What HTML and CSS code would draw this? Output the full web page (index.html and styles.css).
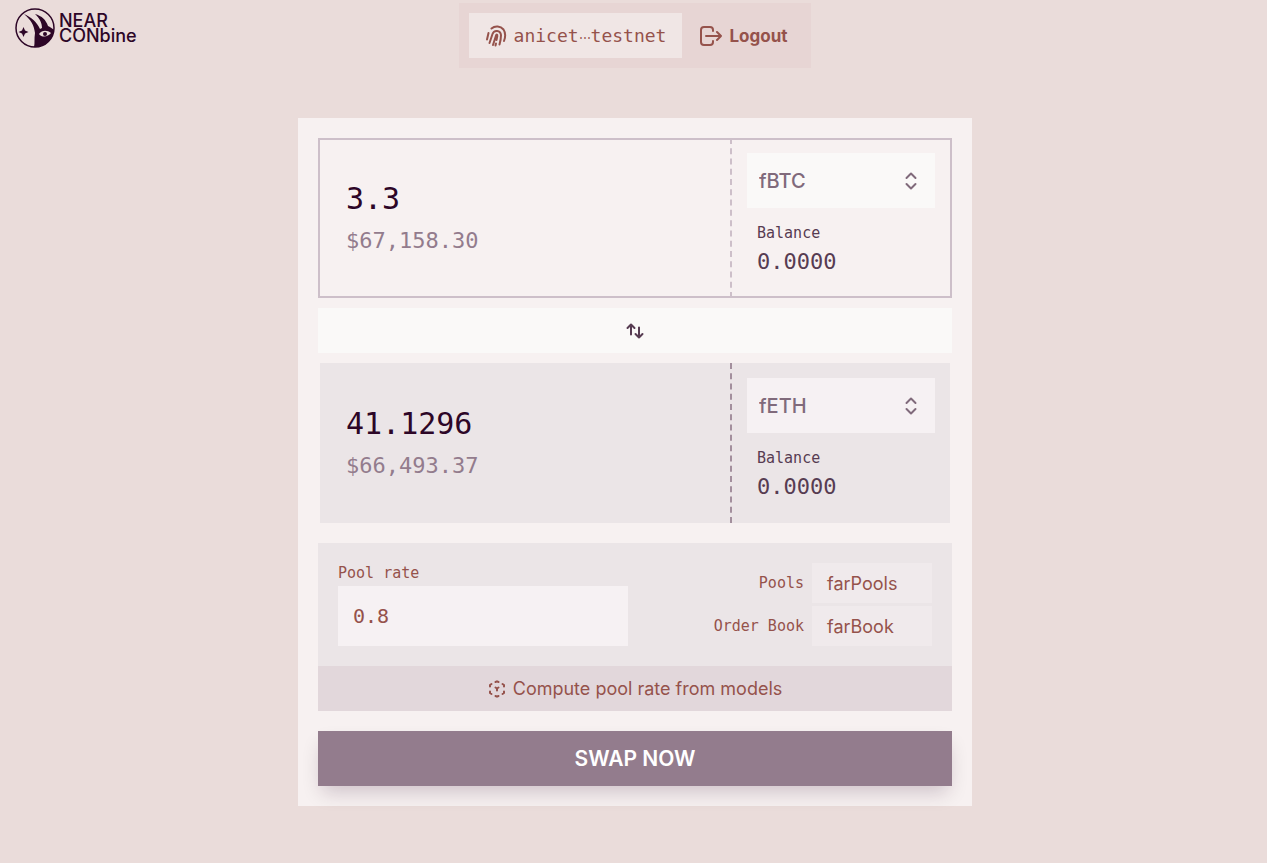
FILE: index.html
```html
<!DOCTYPE html>
<html lang="en">
<head>
    <meta charset="utf-8">
    <meta name="viewport" content="width=device-width, initial-scale=1">
    <title>NEAR CONbine</title>
    <link rel="stylesheet" href="styles.css">
</head>
<body>

    <header class="header">
        <a class="logo" href="#">
            <svg width="40" height="40" viewBox="0 0 40 40" fill="none" aria-hidden="true">
                <circle cx="20" cy="20" r="19" stroke="currentColor" stroke-width="1.5"/>
                <path d="M9 6C16 12 19 17 20 25C19 31 20 35 19 39C28 40 38 33 39 22C37 20 35 19 33 18C31 12 27 8 20 6C25 11 27 15 27 20L25 21C22 14 16 9 9 6Z" fill="currentColor"/>
                <path d="M8.500 19L10 22.500L13.500 24L10 25.500L8.500 29L7 25.500L3.500 24L7 22.500Z" fill="currentColor"/>
                <path d="M24 26C27 22 32 22 36 25C33 29 27 30 24 26Z" fill="#eadcda"/>
                <circle cx="30" cy="26" r="2" fill="currentColor"/>
            </svg>
            <span>NEAR<br>CONbine</span>
        </a>

        <div class="account">
            <button class="account-id" type="button">
                <svg width="22" height="22" viewBox="0 0 22 22" fill="none" stroke="currentColor" stroke-width="2" stroke-linecap="round" aria-hidden="true">
                    <path d="M2 14.500L3.500 8"/>
                    <path d="M6.500 3.500C10 0.500 15.500 1 18.500 4.500C20.500 7.500 20.500 12 19 16"/>
                    <path d="M4.500 18L7.500 9C9 4.500 15.500 5 16 10C16 13 15.500 16 14.500 19.500"/>
                    <path d="M8 20L11 10.500C11.500 9 12.500 9.500 12.300 11L11.500 15M11 18.500L10.500 20.500"/>
                </svg>
                <span>anicet<span class="dots">⋯</span>testnet</span>
            </button>
            <button class="logout" type="button">
                <svg width="22" height="20" viewBox="0 0 22 20" fill="none" stroke="currentColor" stroke-width="2" stroke-linecap="round" stroke-linejoin="round" aria-hidden="true">
                    <path d="M13 5V4Q13 1 10 1H4Q1 1 1 4V16Q1 19 4 19H10Q13 19 13 16V15"/>
                    <path d="M6 10H21M17 6L21 10L17 14"/>
                </svg>
                Logout
            </button>
        </div>
    </header>

    <main class="card">
        <section class="token token-in">
            <div class="amount">
                <input class="amount-input" type="text" value="3.3" aria-label="Amount to swap">
                <div class="amount-usd">$67,158.30</div>
            </div>
            <div class="side">
                <div class="picker">
                    <select aria-label="Token to swap">
                        <option>fBTC</option>
                        <option>fETH</option>
                    </select>
                    <svg width="12" height="18" viewBox="0 0 12 18" fill="none" stroke="currentColor" stroke-width="2" stroke-linecap="round" stroke-linejoin="round" aria-hidden="true">
                        <path d="M1.500 6L6 1.500L10.500 6M1.500 12L6 16.500L10.500 12"/>
                    </svg>
                </div>
                <div class="balance">
                    <div class="balance-label">Balance</div>
                    <div class="balance-value">0.0000</div>
                </div>
            </div>
        </section>

        <button class="flip" type="button" aria-label="Switch tokens">
            <svg width="18" height="16" viewBox="0 0 18 16" fill="none" stroke="currentColor" stroke-width="2" stroke-linecap="round" stroke-linejoin="round" aria-hidden="true">
                <path d="M5 11.500V1.500M1.500 5L5 1.500L8.500 5"/>
                <path d="M13 4.500V14.500M9.500 11L13 14.500L16.500 11"/>
            </svg>
        </button>

        <section class="token token-out">
            <div class="amount">
                <input class="amount-input" type="text" value="41.1296" aria-label="Amount received">
                <div class="amount-usd">$66,493.37</div>
            </div>
            <div class="side">
                <div class="picker">
                    <select aria-label="Token received">
                        <option>fETH</option>
                        <option>fBTC</option>
                    </select>
                    <svg width="12" height="18" viewBox="0 0 12 18" fill="none" stroke="currentColor" stroke-width="2" stroke-linecap="round" stroke-linejoin="round" aria-hidden="true">
                        <path d="M1.500 6L6 1.500L10.500 6M1.500 12L6 16.500L10.500 12"/>
                    </svg>
                </div>
                <div class="balance">
                    <div class="balance-label">Balance</div>
                    <div class="balance-value">0.0000</div>
                </div>
            </div>
        </section>

        <section class="pool">
            <div class="pool-row">
                <div class="rate">
                    <label for="rate">Pool rate</label>
                    <input type="text" id="rate" value="0.8">
                </div>
                <div class="sources">
                    <label for="pools">Pools</label>
                    <button type="button" id="pools">farPools</button>
                    <label for="book">Order Book</label>
                    <button type="button" id="book">farBook</button>
                </div>
            </div>
            <button class="compute" type="button">
                <svg width="18" height="18" viewBox="0 0 18 18" fill="none" stroke="currentColor" stroke-width="2" stroke-linecap="round" stroke-linejoin="round" aria-hidden="true">
                    <path d="M7.500 2L9 1.300L10.500 2M14.500 4L16 5V6.500M16 11.500V13L14.500 14M10.500 16L9 16.700L7.500 16M3.500 14L2 13V11.500M2 6.500V5L3.500 4"/>
                    <path d="M7.500 7.500L9 8.500L10.500 7.500M9 8.500V10.500"/>
                </svg>
                Compute pool rate from models
            </button>
        </section>

        <button class="swap" type="button">SWAP NOW</button>
    </main>

</body>
</html>
```
FILE: styles.css
```css
* {
    box-sizing: border-box;
}

body {
    margin: 0;
    padding: 3px 0 0 3px;
    background: #eadcda;
    color: #2d0627;
    font-family: Inter, sans-serif;
}

button,
input,
select {
    margin: 0;
    border: 0;
    border-radius: 0;
    background: none;
    color: inherit;
    font-family: inherit;
}

button {
    display: flex;
    align-items: center;
    justify-content: center;
    gap: 7px;
    cursor: pointer;
}

/* header */

.header {
    display: grid;
    grid-template-columns: 1fr auto 1fr;
    align-items: start;
}

.logo {
    display: flex;
    align-items: center;
    gap: 4px;
    padding: 5px 0 0 12px;
    color: #2d0627;
    font-size: 18px;
    font-weight: 500;
    line-height: 15px;
    text-decoration: none;
}

.account {
    display: flex;
    padding: 10px;
    background: #e7d5d4;
    color: #95524b;
}

.account button {
    height: 45px;
    padding: 0 16px;
    font-size: 18px;
}

.account .account-id {
    background: #f0e6e5;
    font-family: "DejaVu Sans Mono", monospace;
}

.dots {
    font-family: Inter, sans-serif;
    font-size: 12px;
}

.account .logout {
    padding: 0 14px 0 18px;
    font-size: 17px;
    font-weight: 700;
}

/* swap form */

.card {
    max-width: 674px;
    margin: 50px auto;
    padding: 20px;
    background: #f7f1f1;
}

.token {
    display: grid;
    grid-template-columns: 1fr 220px;
    min-height: 160px;
}

.token-in {
    border: solid #cdbfc9;
    border-width: 0 2px;
    box-shadow: inset 0 2px #cdbfc9, inset 0 -2px #cdbfc9;
}

.token-out {
    margin: 0 2px;
    background: #ebe5e7;
}

.amount {
    display: flex;
    flex-direction: column;
    justify-content: center;
    padding: 2px 26px 0;
    font-family: "DejaVu Sans Mono", monospace;
}

.amount-input {
    width: 100%;
    height: 44px;
    padding: 0;
    font-family: inherit;
    font-size: 30px;
}

.amount-usd {
    color: #937c8d;
    font-size: 22px;
    line-height: 42px;
}

.side {
    padding: 15px 15px 0;
    border-left: 2px dashed #cdbfc9;
}

.token-out .side {
    border-color: #a38f9d;
}

.picker {
    position: relative;
    color: #806a7b;
}

.picker select {
    display: block;
    width: 100%;
    height: 55px;
    padding: 0 12px;
    appearance: none;
    background: #faf9f8;
    font-size: 20px;
    font-weight: 500;
}

.token-out select {
    background: #f6f1f3;
}

.picker svg {
    position: absolute;
    top: 19px;
    right: 18px;
    pointer-events: none;
}

.balance {
    padding: 10px;
    color: #573c52;
    font-family: "DejaVu Sans Mono", monospace;
}

.balance-label {
    font-size: 15px;
    line-height: 30px;
}

.balance-value {
    font-size: 22px;
    line-height: 28px;
}

.flip {
    width: 100%;
    height: 45px;
    margin: 10px 0;
    background: #faf9f8;
    color: #573c52;
}

/* pool */

.pool {
    margin: 20px 0;
    background: #ebe5e7;
    color: #95524b;
}

.pool-row {
    display: flex;
    justify-content: space-between;
    padding: 20px;
}

.pool label {
    font-family: "DejaVu Sans Mono", monospace;
    font-size: 15px;
    line-height: 20px;
}

.rate {
    display: flex;
    flex-direction: column;
    justify-content: space-between;
    width: 290px;
}

.rate input {
    width: 100%;
    height: 60px;
    padding: 0 15px;
    background: #f6f1f3;
    font-family: "DejaVu Sans Mono", monospace;
    font-size: 20px;
}

.sources {
    display: grid;
    grid-template-columns: auto 120px;
    align-items: center;
    gap: 3px 8px;
    text-align: right;
}

.sources button {
    justify-content: flex-start;
    height: 40px;
    padding: 0 15px;
    background: #f0eaec;
    font-size: 18px;
}

.compute {
    width: 100%;
    height: 45px;
    background: #e2d7db;
    font-size: 18px;
}

.swap {
    width: 100%;
    height: 55px;
    background: #937c8d;
    box-shadow: 0 10px 20px -4px rgba(45, 6, 39, 0.2);
    color: #fff;
    font-size: 21px;
    font-weight: 600;
}
```
